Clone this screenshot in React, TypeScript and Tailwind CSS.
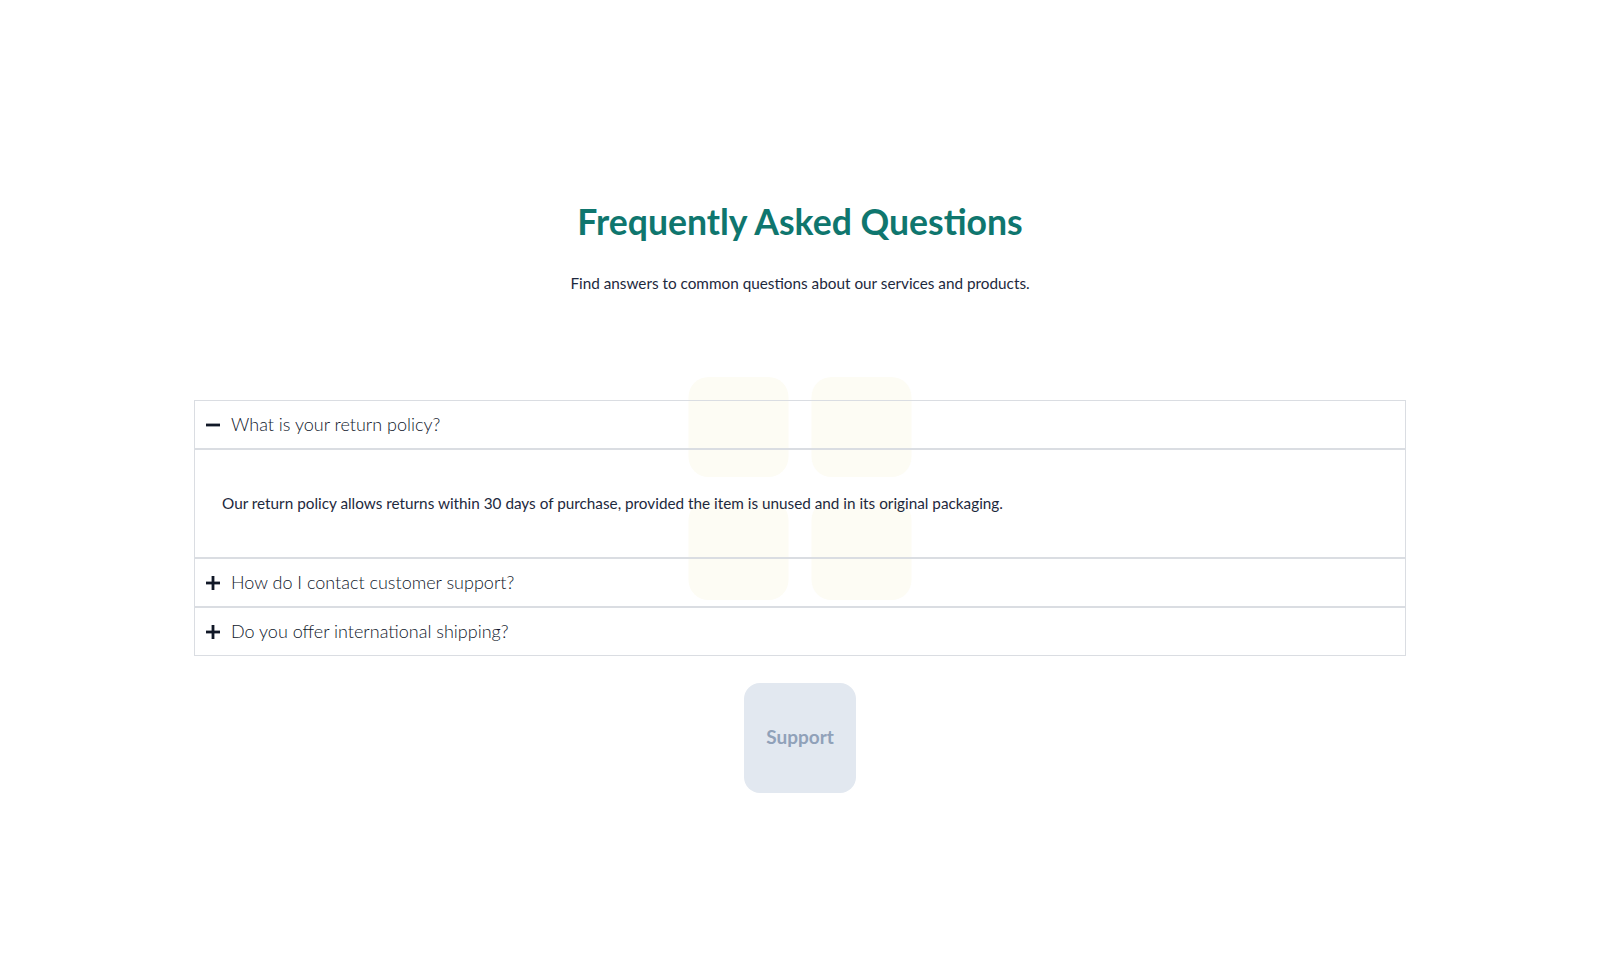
const faqs = [
  {
    question: "What is your return policy?",
    answer:
      "Our return policy allows returns within 30 days of purchase, provided the item is unused and in its original packaging.",
    open: true,
  },
  {
    question: "How do I contact customer support?",
    answer: "You can reach our support team by email or phone, Monday through Friday.",
    open: false,
  },
  {
    question: "Do you offer international shipping?",
    answer: "Yes, we ship to most countries worldwide.",
    open: false,
  },
];

function ToggleIcon({ open }: { open: boolean }) {
  return (
    <svg width="14" height="14" viewBox="0 0 14 14" aria-hidden="true">
      <rect x="0" y="5.6" width="14" height="2.8" fill="#111827" />
      {!open && <rect x="5.6" y="0" width="2.8" height="14" fill="#111827" />}
    </svg>
  );
}

export default function App() {
  return (
    <main className="min-h-screen bg-white font-['Lato',sans-serif] text-slate-800">
      <section className="mx-auto flex max-w-7xl flex-col items-center px-[34px] pt-[200px]">
        <h1 className="text-[35.6px] leading-[44px] font-bold text-[#0f766e]">Frequently Asked Questions</h1>
        <p className="mt-[27px] text-[15.3px] leading-6 text-slate-800">
          Find answers to common questions about our services and products.
        </p>

        <div className="relative mt-[105px] w-full">
          <div className="absolute -top-[23px] left-1/2 grid -translate-x-1/2 grid-cols-[100px_100px] gap-[23px]">
            <div className="h-[100px] rounded-[20px] bg-[#fdfcf4]" />
            <div className="h-[100px] rounded-[20px] bg-[#fdfcf4]" />
            <div className="h-[100px] rounded-[20px] bg-[#fdfcf4]" />
            <div className="h-[100px] rounded-[20px] bg-[#fdfcf4]" />
          </div>

          <div className="relative">
            {faqs.map((faq) => (
              <div key={faq.question}>
                <button className="flex h-[49px] w-full items-center gap-[11px] border border-[#dadde2] px-[11px] text-left">
                  <ToggleIcon open={faq.open} />
                  <span className="text-[18px] font-light text-slate-900">{faq.question}</span>
                </button>
                {faq.open && (
                  <div className="flex h-[109px] items-center border border-[#dadde2] px-[27px]">
                    <p className="text-[15.3px] text-slate-800">{faq.answer}</p>
                  </div>
                )}
              </div>
            ))}
          </div>
        </div>

        <button className="mt-[27px] flex h-[110px] w-28 items-center justify-center rounded-2xl bg-slate-200 pb-[2px] text-[19px] font-bold text-slate-400">
          Support
        </button>
      </section>
    </main>
  );
}
